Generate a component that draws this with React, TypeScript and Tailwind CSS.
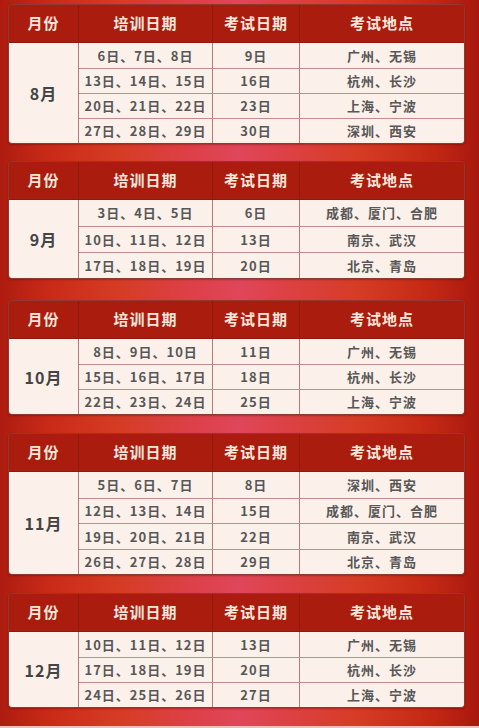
import React from "react";

type Tbl = {
  m: string;
  mt: string;
  rowH: string;
  rows: [string, string, string][];
};

const tables: Tbl[] = [
  {
    m: "8月",
    mt: "mt-[4px]",
    rowH: "h-[25px]",
    rows: [
      ["6日、7日、8日", "9日", "广州、无锡"],
      ["13日、14日、15日", "16日", "杭州、长沙"],
      ["20日、21日、22日", "23日", "上海、宁波"],
      ["27日、28日、29日", "30日", "深圳、西安"],
    ],
  },
  {
    m: "9月",
    mt: "mt-[17px]",
    rowH: "h-[26px]",
    rows: [
      ["3日、4日、5日", "6日", "成都、厦门、合肥"],
      ["10日、11日、12日", "13日", "南京、武汉"],
      ["17日、18日、19日", "20日", "北京、青岛"],
    ],
  },
  {
    m: "10月",
    mt: "mt-[21px]",
    rowH: "h-[25px]",
    rows: [
      ["8日、9日、10日", "11日", "广州、无锡"],
      ["15日、16日、17日", "18日", "杭州、长沙"],
      ["22日、23日、24日", "25日", "上海、宁波"],
    ],
  },
  {
    m: "11月",
    mt: "mt-[18px]",
    rowH: "h-[25.5px]",
    rows: [
      ["5日、6日、7日", "8日", "深圳、西安"],
      ["12日、13日、14日", "15日", "成都、厦门、合肥"],
      ["19日、20日、21日", "22日", "南京、武汉"],
      ["26日、27日、28日", "29日", "北京、青岛"],
    ],
  },
  {
    m: "12月",
    mt: "mt-[18px]",
    rowH: "h-[25px]",
    rows: [
      ["10日、11日、12日", "13日", "广州、无锡"],
      ["17日、18日、19日", "20日", "杭州、长沙"],
      ["24日、25日、26日", "27日", "上海、宁波"],
    ],
  },
];

function Table({ t }: { t: Tbl }) {
  return (
    <div
      className={`${t.mt} w-[457px] rounded-[4px] border border-[#8e3a30] overflow-hidden shadow-[0_1px_2px_rgba(80,0,0,0.35)]`}
    >
      <div className="flex h-[38px] bg-[#aa1d0e] text-[#fbe7dd] text-[15px] font-bold tracking-[1px] border-b border-[#8f1a0c]">
        <div className="w-[70px] flex items-center justify-center border-r border-[#8f1a0c]">月份</div>
        <div className="w-[134px] flex items-center justify-center border-r border-[#8f1a0c]">培训日期</div>
        <div className="w-[87px] flex items-center justify-center border-r border-[#8f1a0c]">考试日期</div>
        <div className="flex-1 flex items-center justify-center">考试地点</div>
      </div>
      <div className="flex bg-[#fcf0ea]">
        <div className="w-[70px] flex items-center justify-center border-r border-[#b07a78] text-[16px] font-bold text-[#444] tracking-[1px]">
          {t.m}
        </div>
        <div className="flex-1 flex flex-col">
          {t.rows.map((r, i) => (
            <div
              key={i}
              className={`${t.rowH} flex text-[13px] font-bold text-[#575757] tracking-[1px] ${
                i > 0 ? "border-t border-[#c48c8a]" : ""
              }`}
            >
              <div className="w-[134px] flex items-center justify-center border-r border-[#b07a78]">{r[0]}</div>
              <div className="w-[87px] flex items-center justify-center border-r border-[#b07a78]">{r[1]}</div>
              <div className="flex-1 flex items-center justify-center">{r[2]}</div>
            </div>
          ))}
        </div>
      </div>
    </div>
  );
}

export default function App() {
  return (
    <div
      className="w-[479px] h-[728px] overflow-hidden bg-[linear-gradient(90deg,#ad1c10_0%,#c92a18_10%,#d63c24_25%,#dd4048_40%,#e0465a_50%,#dc4040_62%,#d63c24_75%,#c42814_90%,#a8180e_100%)] flex flex-col pl-[8px] border-b-2 border-[#f0c0bc]"
      style={{ fontFamily: '"Noto Sans CJK SC", "Noto Sans", sans-serif' }}
    >
      {tables.map((t) => (
        <Table key={t.m} t={t} />
      ))}
    </div>
  );
}
